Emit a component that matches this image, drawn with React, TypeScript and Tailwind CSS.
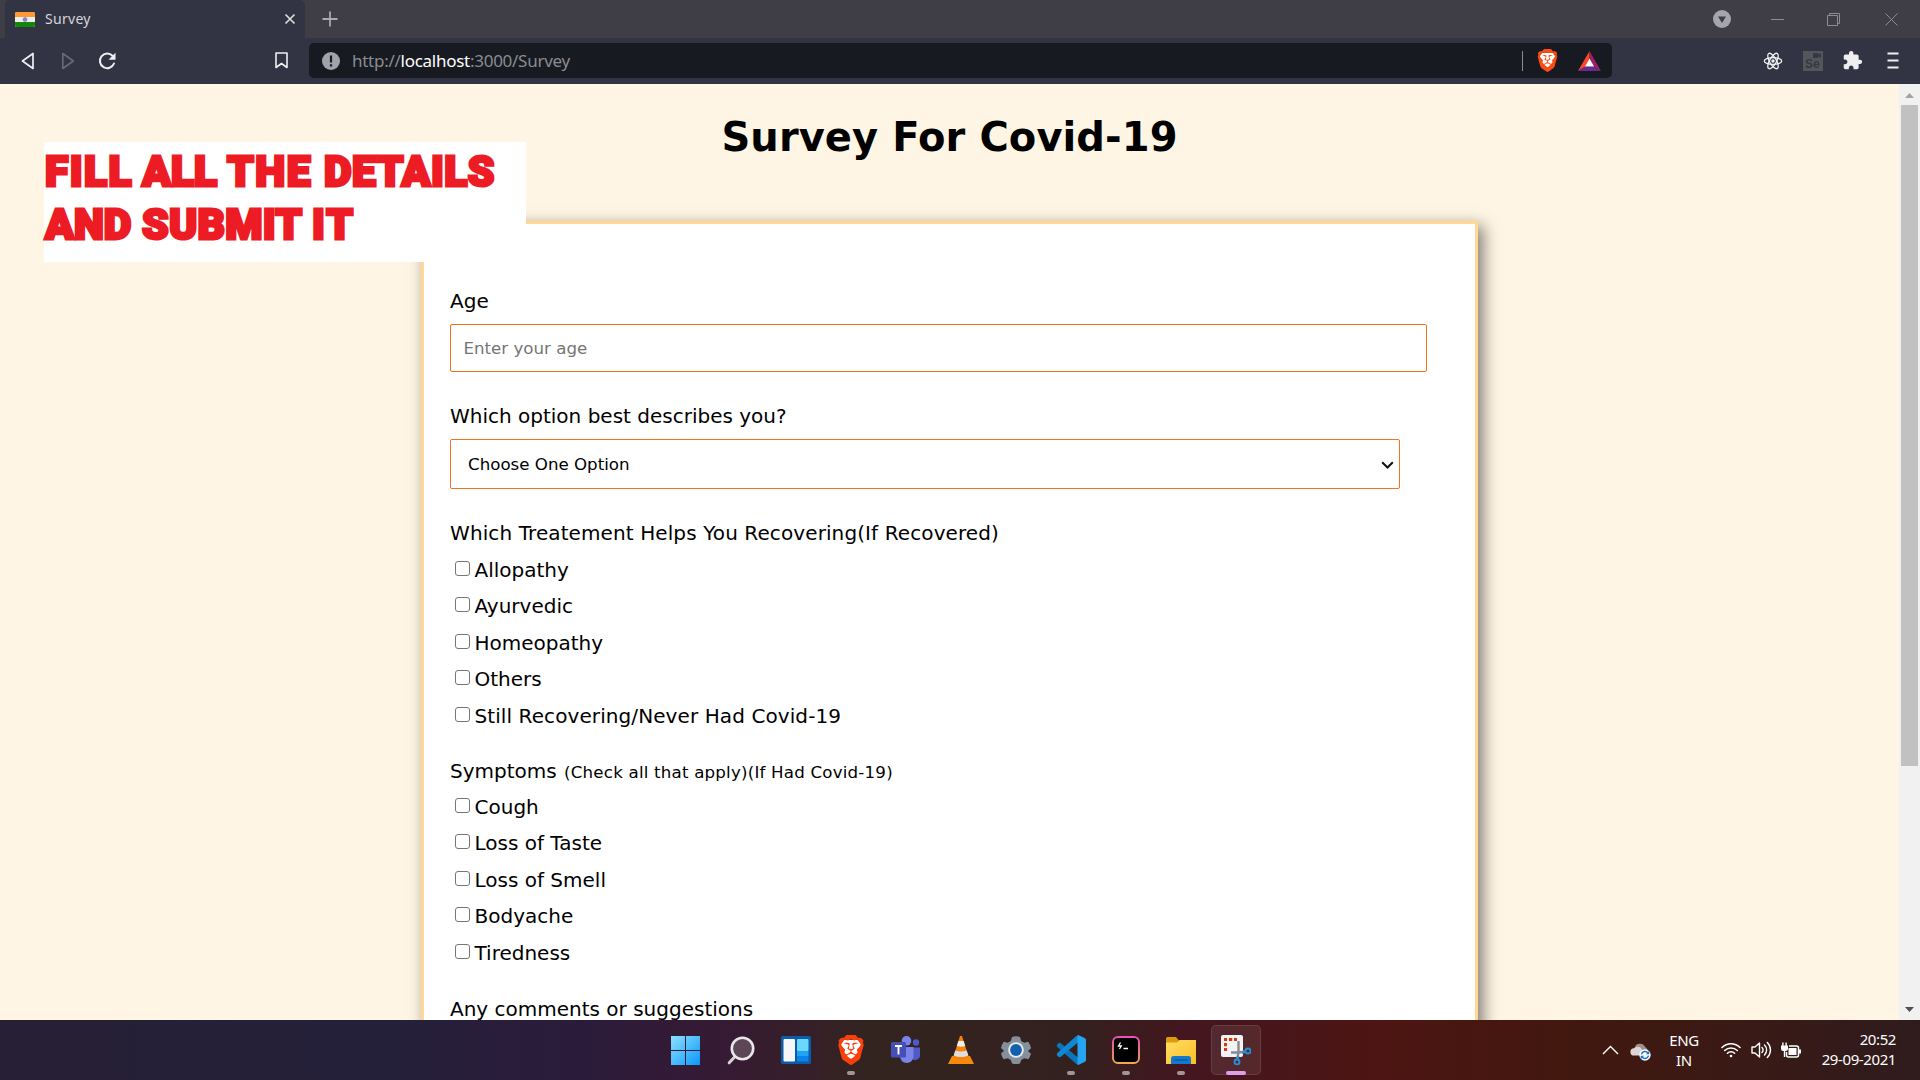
import type { ReactNode } from "react";
import { SiBrave } from "react-icons/si";
import { MdExtension } from "react-icons/md";

const treatments = ["Allopathy", "Ayurvedic", "Homeopathy", "Others", "Still Recovering/Never Had Covid-19"];
const symptoms = ["Cough", "Loss of Taste", "Loss of Smell", "Bodyache", "Tiredness"];

function BraveLogo({ className, lion }: { className: string; lion: string }) {
  return (
    <div className={`relative ${className}`}>
      <svg viewBox="0 0 24 24" className="absolute inset-0 h-full w-full">
        <path d="M6 4h12l2 3-2 9-6 5-6-5-2-9z" fill="#fff" />
      </svg>
      <SiBrave className={`absolute inset-0 h-full w-full ${lion}`} />
    </div>
  );
}

function TabStrip() {
  return (
    <div className="flex h-[38px] shrink-0 bg-[#3f3e46] pl-[5px]">
      <div className="flex w-[300px] items-center rounded-t-[5px] bg-[#323443] pl-[10px] pr-[9px]">
        <svg width="20" height="15" viewBox="0 0 20 15">
          <rect width="20" height="15" rx="2" fill="#eee" />
          <path d="M2 0h16a2 2 0 0 1 2 2v3H0V2a2 2 0 0 1 2-2z" fill="#ff9933" />
          <path d="M0 10h20v3a2 2 0 0 1-2 2H2a2 2 0 0 1-2-2z" fill="#138808" />
          <circle cx="10" cy="7.5" r="2" fill="#8a8acb" stroke="#6a6ab8" strokeWidth="0.6" />
        </svg>
        <span className="ml-[10px] font-['Noto_Sans',sans-serif] text-[14px] leading-5 tracking-[0.3px] text-[#d6d6da]">Survey</span>
        <svg width="12" height="12" viewBox="0 0 12 12" className="ml-auto">
          <path d="M1.5 1.5l9 9M10.500 1.500l-9 9" stroke="#dcdce0" strokeWidth="1.7" />
        </svg>
      </div>
      <svg width="16" height="16" viewBox="0 0 16 16" className="ml-[17px] mt-[11px]">
        <path d="M8 .5v15M.5 8h15" stroke="#a9a9ae" strokeWidth="1.8" />
      </svg>
      <div className="ml-auto flex items-center pr-[22px]">
        <svg width="18" height="18" viewBox="0 0 18 18">
          <circle cx="9" cy="9" r="9" fill="#a5a6ac" />
          <path d="M5 6.500h8L9 13z" fill="#3f3e46" />
        </svg>
        <div className="ml-[40px] h-px w-[13px] bg-[#8c8c91]" />
        <svg width="13" height="13" viewBox="0 0 13 13" className="ml-[43px]">
          <path d="M.5 2.500h10v10H.5zM2.500 2.500v-2h10v10h-2" fill="none" stroke="#8c8c91" />
        </svg>
        <svg width="13" height="13" viewBox="0 0 13 13" className="ml-[45px]">
          <path d="M.5 .5l12 12M12.500 .5l-12 12" stroke="#8c8c91" />
        </svg>
      </div>
    </div>
  );
}

function Toolbar() {
  return (
    <div className="flex h-[46px] shrink-0 items-center bg-[#323443] pb-px pl-[21px] pr-[21px]">
      <svg width="14" height="18" viewBox="0 0 14 18">
        <path d="M12 1.500v15L1.500 9z" fill="none" stroke="#efeff2" strokeWidth="1.7" strokeLinejoin="round" />
      </svg>
      <svg width="14" height="18" viewBox="0 0 14 18" className="ml-[26px]">
        <path d="M1.800 1.500v15L12.300 9z" fill="none" stroke="#696a77" strokeWidth="1.600" strokeLinejoin="round" />
      </svg>
      <svg width="18" height="18" viewBox="0 0 18 18" className="ml-[23px]">
        <path d="M14.500 3.800A7.300 7.300 0 1 0 16 11.500" fill="none" stroke="#efeff2" strokeWidth="2" strokeLinecap="round" />
        <path d="M17.500 .8v7h-7z" fill="#efeff2" />
      </svg>
      <svg width="13" height="17" viewBox="0 0 13 17" className="ml-[159px]">
        <path d="M1 1h11v14.500L6.500 11.500 1 15.500z" fill="none" stroke="#efeff2" strokeWidth="1.600" strokeLinejoin="round" />
      </svg>
      <div className="ml-[21px] flex h-[35px] w-[1303px] items-center rounded-[5px] bg-[#181a21] pl-[13px] pr-[11px]">
        <svg width="18" height="18" viewBox="0 0 18 18">
          <circle cx="9" cy="9" r="9" fill="#a0a2ac" />
          <path d="M9 3.500v7M9 12.300v2.200" stroke="#181a21" strokeWidth="2.200" />
        </svg>
        <div className="ml-[12px] whitespace-pre font-['Noto_Sans',sans-serif] text-[17px] leading-6 tracking-[-0.27px] text-[#8b8c91]">
          http://<span className="text-white">localhost</span>:3000/Survey
        </div>
        <div className="ml-auto h-5 w-px bg-[#8b8c91]" />
        <BraveLogo className="ml-[13px] h-[23px] w-[23px]" lion="text-[#fb4a14]" />
        <svg width="23" height="20" viewBox="0 0 23 20" className="ml-[19px]">
          <path d="M11.500 0L0 20l7.500-4.500 4-8z" fill="#ff4724" />
          <path d="M11.500 0L23 20l-7.500-4.500-4-8z" fill="#9e1f63" />
          <path d="M0 20h23l-7.500-4.500h-8z" fill="#662d91" />
          <path d="M11.500 7.500l4.500 8H7z" fill="#fff" />
        </svg>
      </div>
      <div className="ml-auto flex items-center">
        <svg width="20" height="20" viewBox="0 0 20 20" fill="none" stroke="#f2f2f5" strokeWidth="1.300">
          <circle cx="10" cy="10" r="1.700" fill="#f2f2f5" stroke="none" />
          <ellipse cx="10" cy="10" rx="8.700" ry="3.400" />
          <ellipse cx="10" cy="10" rx="8.700" ry="3.400" transform="rotate(60 10 10)" />
          <ellipse cx="10" cy="10" rx="8.700" ry="3.400" transform="rotate(120 10 10)" />
        </svg>
        <div className="relative ml-[20px] flex h-[20px] w-[20px] items-end bg-[#55565a] pl-[2px] font-['Liberation_Sans',sans-serif] text-[12px] font-bold leading-[13px] text-[#353848]">
          Se
          <svg width="8" height="5" viewBox="0 0 8 5" className="absolute right-[2px] top-[2px]">
            <path d="M0 0h5v1.500L8 0v5L5 3.500V5H0z" fill="#353848" />
          </svg>
        </div>
        <MdExtension className="ml-[19px] h-[21px] w-[21px] text-[#efeff2]" />
        <svg width="12" height="17" viewBox="0 0 12 17" className="ml-[24px]">
          <path d="M.5 1.500h11M.5 8.500h11M.5 15.500h11" stroke="#efeff2" strokeWidth="1.800" />
        </svg>
      </div>
    </div>
  );
}

function CheckRow({ label }: { label: string }) {
  return (
    <label className="flex h-[36.500px] pl-[5px] leading-[36px]">
      <span className="mt-[9px] h-[15px] w-[15px] shrink-0 rounded-[3px] border border-[#767676] bg-white" />
      <span className={label.length > 30 ? "ml-[4.500px] tracking-[0.090px]" : "ml-[4.500px]"}>{label}</span>
    </label>
  );
}

function SurveyForm() {
  return (
    <div className="mx-auto mt-[60px] h-[1300px] w-[1057px] shrink-0 border-[3px] border-[#ffd894] bg-white pl-[26px] pt-[65px] text-[20px] leading-6 shadow-[5px_5px_15px_rgba(0,0,0,0.5)]">
      <div>Age</div>
      <div className="mt-[11px] flex h-[48px] w-[977px] items-center rounded-[2px] border border-[#f0731b] pl-[12.500px] pt-[2px] text-[16.670px] text-[#757575]">
        Enter your age
      </div>
      <div className="mt-8">Which option best describes you?</div>
      <div className="mt-[11px] flex h-[50px] w-[950px] items-center rounded-[2px] border border-[#f0731b] pl-[17px] pr-[5px] pt-px text-[16.670px]">
        Choose One Option
        <svg width="13" height="8" viewBox="0 0 13 8" className="ml-auto">
          <path d="M1.200 1.200l5.300 5.300 5.300-5.300" fill="none" stroke="#111" strokeWidth="2" />
        </svg>
      </div>
      <div className="mt-8 tracking-[0.1px]">Which Treatement Helps You Recovering(If Recovered)</div>
      <div className="mt-[6.500px]">
        {treatments.map((t) => <CheckRow key={t} label={t} />)}
      </div>
      <div className="mt-[24.500px] h-6 whitespace-nowrap">
        Symptoms <span className="ml-[1px] text-[16.670px] tracking-[0.200px]">(Check all that apply)(If Had Covid-19)</span>
      </div>
      <div className="mt-[6px]">
        {symptoms.map((t) => <CheckRow key={t} label={t} />)}
      </div>
      <div className="mt-[26px]">Any comments or suggestions</div>
    </div>
  );
}

function Banner() {
  return (
    <div className="absolute left-[44px] top-[58px] h-[120px] w-[482px] bg-white pl-px pt-[3px] font-['Roboto',sans-serif] text-[42.500px] font-black leading-[53px] text-[#ed1c24] [-webkit-text-stroke:3px_#ed1c24]">
      <div className="flex">
        <span className="w-[97px] tracking-[1.500px]">FILL</span>
        <span className="w-[85px]">ALL</span>
        <span className="w-[97px] tracking-[1.500px]">THE</span>
        <span className="tracking-[0.500px]">DETAILS</span>
      </div>
      <div className="flex">
        <span className="w-[97px]">AND</span>
        <span className="w-[170px] tracking-[0.300px]">SUBMIT</span>
        <span className="tracking-[2px]">IT</span>
      </div>
    </div>
  );
}

function Page() {
  return (
    <div className="relative flex h-[936px] shrink-0 overflow-hidden">
      <main className="flex w-[1899px] flex-col overflow-hidden bg-[#fff5e4] font-['DejaVu_Sans',sans-serif] text-black">
        <h1 className="mt-[29px] text-center text-[40px] font-bold leading-[48px] tracking-[0.080px]">Survey For Covid-19</h1>
        <SurveyForm />
      </main>
      <div className="flex w-[21px] flex-col items-center bg-[#f1f1f1]">
        <svg width="9" height="5" viewBox="0 0 9 5" className="mt-[9px]"><path d="M0 5L4.500 0 9 5z" fill="#a3a3a3" /></svg>
        <div className="mt-[7px] h-[661px] w-[17px] bg-[#c1c1c1]" />
        <svg width="9" height="5" viewBox="0 0 9 5" className="mb-[8px] mt-auto"><path d="M0 0h9L4.500 5z" fill="#505050" /></svg>
      </div>
      <Banner />
    </div>
  );
}

function Task({ children, open, active }: { children: ReactNode; open?: boolean; active?: boolean }) {
  return (
    <div className="flex w-[55px] justify-center">
      <div className={`relative flex h-[50px] w-[50px] items-center justify-center rounded-[5px] border ${active ? "border-white/10 bg-white/8" : "border-transparent"}`}>
        {children}
        {open && <div className="absolute -bottom-px left-[20px] h-[4px] w-[8px] rounded-full bg-[#a39596]" />}
        {active && <div className="absolute -bottom-px left-[14px] h-[4px] w-[20px] rounded-full bg-[#dd9fe6]" />}
      </div>
    </div>
  );
}

function TaskIcons() {
  return (
    <div className="flex items-center">
      <Task>
        <svg width="29" height="29" viewBox="0 0 29 29">
          <defs>
            <linearGradient id="win" gradientUnits="userSpaceOnUse" x1="0" y1="0" x2="29" y2="29"><stop stopColor="#8ee0ff" /><stop offset="1" stopColor="#0a97fb" /></linearGradient>
          </defs>
          <path d="M0 0h14v14H0zM15 0h14v14H15zM0 15h14v14H0zM15 15h14v14H15z" fill="url(#win)" />
        </svg>
      </Task>
      <Task>
        <svg width="28" height="29" viewBox="0 0 28 29">
          <path d="M9.500 19L2.200 26.800" stroke="#d6d3d8" strokeWidth="3" strokeLinecap="round" />
          <circle cx="15.500" cy="12.500" r="10.700" fill="#5c4658" stroke="#e9e7eb" strokeWidth="2.600" />
        </svg>
      </Task>
      <Task>
        <svg width="30" height="28" viewBox="0 0 30 28">
          <rect width="30" height="28" rx="1.500" fill="#0c5ca8" />
          <rect x="2.500" y="3" width="11.500" height="22.500" rx="1" fill="#f6f6f8" />
          <rect x="16" y="3" width="11.500" height="12" rx="1" fill="#6cd6ff" />
          <rect x="16" y="15" width="11.500" height="5" fill="#1ea3f5" />
          <rect x="16" y="20" width="11.500" height="5.500" rx="1" fill="#0a84ea" />
        </svg>
      </Task>
      <Task open>
        <BraveLogo className="h-[30px] w-[30px]" lion="text-[#fb3f0c]" />
      </Task>
      <Task>
        <svg width="29" height="28" viewBox="0 0 29 28">
          <circle cx="25" cy="6.500" r="3.200" fill="#5059c9" />
          <path d="M20 11.500h9v8.500a5 5 0 0 1-8 3z" fill="#5059c9" />
          <circle cx="15.500" cy="4.800" r="4.800" fill="#7b83eb" />
          <path d="M9 11h13.500v10a6.800 6.800 0 0 1-13.500 0z" fill="#7b83eb" />
          <rect y="6" width="15" height="15.500" rx="1.500" fill="#464eb8" />
          <path d="M4 10h7M7.500 10v8.500" stroke="#fff" strokeWidth="1.900" />
        </svg>
      </Task>
      <Task>
        <svg width="26" height="28" viewBox="0 0 26 28">
          <path d="M4 20h18l4 8H0z" fill="#f58a0b" />
          <path d="M12 0h2l7 22q-8 4-16 0z" fill="#f7820a" />
          <path d="M10.400 5h5.200l1.600 5q-4.200 1.500-8.400 0z" fill="#efefef" />
          <path d="M7.300 14.500q5.700 2 11.400 0l1.700 5q-7.400 3-14.800 0z" fill="#dedede" />
        </svg>
      </Task>
      <Task>
        <svg width="30" height="28" viewBox="0 0 30 28">
          <path d="M11 1q4-1.400 8 0l1.200 4 3 1.700 4-1q2.300 3 2.800 6.500l-3 2.800 3 2.800q-.8 3.200-2.800 5.500l-4-1-3 1.700-1.200 3.500q-4 1.400-8 0L9.800 24l-3-1.700-4 1Q.8 20.800 0 17.500L3 14.700 0 12Q.6 8.500 2.800 5.700l4 1 3-1.700z" fill="#84909b" />
          <circle cx="15" cy="14" r="7.800" fill="#e8eaec" />
          <circle cx="15" cy="14" r="5.900" fill="#1261ad" />
        </svg>
      </Task>
      <Task open>
        <svg width="30" height="30" viewBox="0 0 30 30">
          <path d="M1 9.500l2-1.800 1.500.2L22.500 23v6.500L20 28.800.8 11.500z" fill="#0a74bd" />
          <path d="M1 20.500l2 1.800 1.500-.2L22.500 7V.5L20 1.200.8 18.500z" fill="#1186d3" />
          <path d="M21.500.2q.6-.2 1.200.1l6.300 3q1 .6 1 1.700v20q0 1.200-1 1.700l-6.300 3q-.6.300-1.200.1z" fill="#25a4f4" />
        </svg>
      </Task>
      <Task open>
        <svg width="28" height="28" viewBox="0 0 28 28">
          <defs><linearGradient id="hy" x1="0" y1="0" x2="0" y2="1"><stop stopColor="#ee4fb4" /><stop offset="1" stopColor="#f2a74e" /></linearGradient></defs>
          <rect x="1" y="1" width="26" height="26" rx="5" fill="#000" stroke="url(#hy)" strokeWidth="1.900" />
          <path d="M8.500 6.500L6.500 10h2.800L7.500 13M11.500 12.500h4.500" fill="none" stroke="#fff" strokeWidth="1.300" />
        </svg>
      </Task>
      <Task open>
        <svg width="30" height="27" viewBox="0 0 30 27">
          <defs><linearGradient id="fo" x1="0" y1="0" x2="1" y2="1"><stop stopColor="#ffdd66" /><stop offset="1" stopColor="#fbbf24" /></linearGradient></defs>
          <path d="M0 8V1.500Q0 0 1.500 0h8.500l3 3.500V8z" fill="#dd9b0b" />
          <path d="M0 5.500h11L13.500 3H30v24H0z" fill="url(#fo)" />
          <path d="M5 27v-5.500Q5 19 7.500 19h15q2.500 0 2.500 2.500V27z" fill="#1478cb" />
          <path d="M8.500 23h13" stroke="#0b559c" strokeWidth="1.200" />
        </svg>
      </Task>
      <Task active>
        <svg width="30" height="30" viewBox="0 0 30 30">
          <rect width="22" height="22" rx="2" fill="#f3f3f5" />
          <path d="M3 3h3v3H3zM8 3h3.200v3H8zM13 3h3v3h-3zM3 8h3v3.200H3zM3 13h3v3H3z" fill="#d8390c" />
          <path d="M17.500 6v12l-1.500 5.500M10 17.500h8l6-1" fill="none" stroke="#858b92" strokeWidth="2.400" />
          <circle cx="27" cy="16" r="2.500" fill="none" stroke="#1f93dd" strokeWidth="1.900" />
          <circle cx="16" cy="27" r="2.500" fill="none" stroke="#1f93dd" strokeWidth="1.900" />
          <path d="M21 18l4-1.500M17.500 21l-1 4" stroke="#1f93dd" strokeWidth="1.900" />
        </svg>
      </Task>
    </div>
  );
}

function Tray() {
  return (
    <div className="ml-auto flex items-center pr-[24px] font-['Noto_Sans',sans-serif] text-[15px] leading-5 tracking-[-0.400px] text-white">
      <svg width="17" height="10" viewBox="0 0 17 10"><path d="M1 9l7.500-7.500L16 9" fill="none" stroke="#fff" strokeWidth="1.400" /></svg>
      <svg width="21" height="19" viewBox="0 0 21 19" className="ml-[11px] mt-[3px]">
        <path d="M4.500 7A5.500 5.500 0 0 1 15 5a4 4 0 0 1 2 6L8 12z" fill="#9f8f8e" />
        <path d="M4 13.500A3.600 3.600 0 0 1 4 6.300 5 5 0 0 1 12 7.500l4 6z" fill="#dcd5d4" />
        <circle cx="15" cy="13" r="5.700" fill="#fff" />
        <path d="M11.500 12.300a3.600 3.600 0 0 1 6.400-1.300M18.500 13.700a3.600 3.600 0 0 1-6.400 1.300" fill="none" stroke="#1673c4" strokeWidth="1.500" />
        <path d="M19.300 8.800v3.400h-3.400zM10.700 17.200v-3.400h3.400z" fill="#1673c4" />
      </svg>
      <div className="ml-[18px] text-center"><div>ENG</div><div>IN</div></div>
      <svg width="20" height="16" viewBox="0 0 20 16" className="ml-[22px] shrink-0" fill="none" stroke="#fff" strokeWidth="1.500" strokeLinecap="round">
        <path d="M1 5.500a12.700 12.700 0 0 1 18 0M3.700 8.500a9 9 0 0 1 12.600 0M6.400 11.300a5.100 5.100 0 0 1 7.200 0" />
        <circle cx="10" cy="14" r="1.300" fill="#fff" stroke="none" />
      </svg>
      <svg width="21" height="18" viewBox="0 0 21 18" className="ml-[10px]" fill="none" stroke="#fff" strokeWidth="1.400" strokeLinejoin="round" strokeLinecap="round">
        <path d="M1 6v6h3l4.500 4V2L4 6zM11 6.500a3.500 3.500 0 0 1 0 5M13.500 4a7 7 0 0 1 0 10M16.300 1.500a10.500 10.500 0 0 1 0 15" />
      </svg>
      <svg width="20" height="17" viewBox="0 0 20 17" className="ml-[9px]">
        <path d="M8 4h7.500q2 0 2 2v7q0 2-2 2h-8q-2 0-2-2v-3" fill="none" stroke="#fff" strokeWidth="1.500" />
        <rect x="7.500" y="6" width="8" height="7" fill="#fff" />
        <path d="M18 7.500h2v4h-2zM0 3.500h7v3Q7 9 4.500 9h-2Q0 9 0 6.500zM1.200.5h1.400v3H1.200zM4.400.5h1.400v3H4.400zM2.800 9h1.400v6H2.800z" fill="#fff" />
      </svg>
      <div className="mb-[2px] ml-[21px] text-right"><div>20:52</div><div>29-09-2021</div></div>
    </div>
  );
}

function Taskbar() {
  return (
    <div className="flex h-[60px] shrink-0 items-center bg-[linear-gradient(90deg,#261f35_0px,#25203a_400px,#2b1b3b_580px,#371a33_730px,#33241f_870px,#33211f_1070px,#44161f_1190px,#4d1513_1380px,#42180f_1560px,#391a16_1750px,#2f1b1d_1920px)] pl-[658px]">
      <TaskIcons />
      <Tray />
    </div>
  );
}

export default function App() {
  return (
    <div className="flex h-[1080px] w-[1920px] flex-col overflow-hidden">
      <TabStrip />
      <Toolbar />
      <Page />
      <Taskbar />
    </div>
  );
}
